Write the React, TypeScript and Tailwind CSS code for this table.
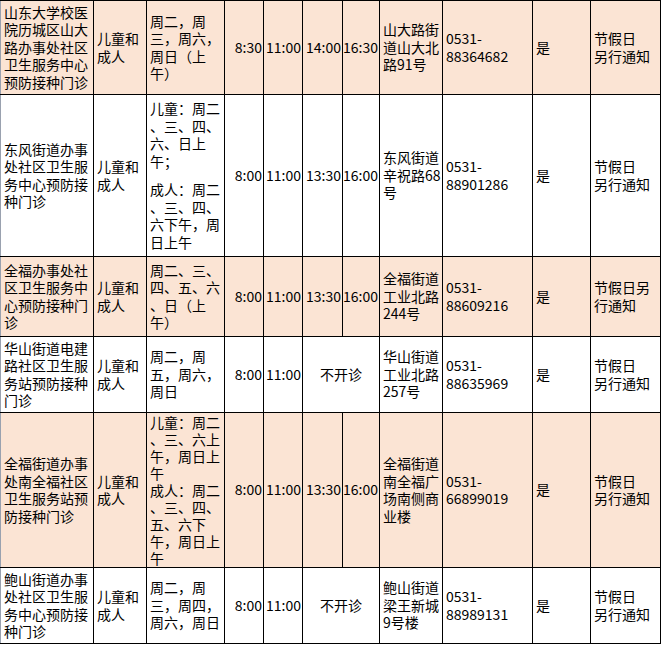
import React from "react";

type Row = {
  pink: boolean;
  h: string;
  name: string[];
  days: string[][];
  gap?: boolean;
  tight?: boolean;
  times: string[];
  addr: string[];
  phone: string[];
  note: string[];
};

const rows: Row[] = [
  {
    pink: true,
    h: "h-[94px]",
    name: ["山东大学校医", "院历城区山大", "路办事处社区", "卫生服务中心", "预防接种门诊"],
    days: [["周二，周", "三，周六，", "周日（上", "午）"]],
    times: ["8:30", "11:00", "14:00", "16:30"],
    addr: ["山大路街", "道山大北", "路91号"],
    phone: ["0531-", "88364682"],
    note: ["节假日", "另行通知"],
  },
  {
    pink: false,
    h: "h-[162px]",
    name: ["东风街道办事", "处社区卫生服", "务中心预防接", "种门诊"],
    days: [
      ["儿童：周二", "、三、四、", "六、日上", "午；"],
      ["成人：周二", "、三、四、", "六下午，周", "日上午"],
    ],
    gap: true,
    times: ["8:00", "11:00", "13:30", "16:00"],
    addr: ["东风街道", "辛祝路68", "号"],
    phone: ["0531-", "88901286"],
    note: ["节假日", "另行通知"],
  },
  {
    pink: true,
    h: "h-[80px]",
    name: ["全福办事处社", "区卫生服务中", "心预防接种门", "诊"],
    days: [["周二、三、", "四、五、六", "、日（上", "午）"]],
    times: ["8:00", "11:00", "13:30", "16:00"],
    addr: ["全福街道", "工业北路", "244号"],
    phone: ["0531-", "88609216"],
    note: ["节假日另", "行通知"],
  },
  {
    pink: false,
    h: "h-[76px]",
    name: ["华山街道电建", "路社区卫生服", "务站预防接种", "门诊"],
    days: [["周二，周", "五，周六，", "周日"]],
    times: ["8:00", "11:00"],
    addr: ["华山街道", "工业北路", "257号"],
    phone: ["0531-", "88635969"],
    note: ["节假日", "另行通知"],
  },
  {
    pink: true,
    h: "h-[155px]",
    name: ["全福街道办事", "处南全福社区", "卫生服务站预", "防接种门诊"],
    days: [
      ["儿童：周二", "、三、六上", "午，周日上", "午"],
      ["成人：周二", "、三、四、", "五、六下", "午，周日上", "午"],
    ],
    tight: true,
    times: ["8:00", "11:00", "13:30", "16:00"],
    addr: ["全福街道", "南全福广", "场南侧商", "业楼"],
    phone: ["0531-", "66899019"],
    note: ["节假日", "另行通知"],
  },
  {
    pink: false,
    h: "h-[76px]",
    name: ["鲍山街道办事", "处社区卫生服", "务中心预防接", "种门诊"],
    days: [["周二，周", "三，周四，", "周六，周日"]],
    times: ["8:00", "11:00"],
    addr: ["鲍山街道", "梁王新城", "9号楼"],
    phone: ["0531-", "88989131"],
    note: ["节假日", "另行通知"],
  },
];

const Lines = ({ lines }: { lines: string[] }) => (
  <div>
    {lines.map((l, i) => (
      <div key={i} className="whitespace-nowrap">
        {l}
      </div>
    ))}
  </div>
);

const td = "border border-black align-middle p-0 pl-[3px] overflow-hidden";
const tdTime = "border border-black align-middle p-0 pr-[1px] text-right whitespace-nowrap";

export default function App() {
  return (
    <div
      className="w-[663px] h-[645px] bg-white overflow-hidden text-black text-[14px] leading-[17.5px]"
      style={{ fontFamily: '"Noto Sans CJK SC", "Noto Sans", sans-serif' }}
    >
      <table className="table-fixed border-collapse w-[660px]">
        <colgroup>
          <col className="w-[93px]" />
          <col className="w-[53px]" />
          <col className="w-[78px]" />
          <col className="w-[39px]" />
          <col className="w-[39px]" />
          <col className="w-[40px]" />
          <col className="w-[37px]" />
          <col className="w-[63px]" />
          <col className="w-[90px]" />
          <col className="w-[58px]" />
          <col className="w-[70px]" />
        </colgroup>
        <tbody>
          {rows.map((r, i) => (
            <tr key={i} className={`${r.h} ${r.pink ? "bg-[#fbe4d4]" : "bg-white"}`}>
              <td className={`${td} border-l-gray-400`}>
                <Lines lines={r.name} />
              </td>
              <td className={td}>
                <Lines lines={["儿童和", "成人"]} />
              </td>
              <td className={td}>
                <div
                  className={`flex flex-col ${r.gap ? "gap-[11px]" : ""} ${
                    r.tight ? "leading-[17px]" : ""
                  }`}
                >
                  {r.days.map((d, j) => (
                    <Lines key={j} lines={d} />
                  ))}
                </div>
              </td>
              <td className={tdTime}>{r.times[0]}</td>
              <td className={tdTime}>{r.times[1]}</td>
              {r.times.length > 2 ? (
                <>
                  <td className={tdTime}>{r.times[2]}</td>
                  <td className={tdTime}>{r.times[3]}</td>
                </>
              ) : (
                <td
                  colSpan={2}
                  className="border border-black align-middle p-0 text-center whitespace-nowrap"
                >
                  不开诊
                </td>
              )}
              <td className={td}>
                <Lines lines={r.addr} />
              </td>
              <td className={td}>
                <Lines lines={r.phone} />
              </td>
              <td className={td}>是</td>
              <td className={td}>
                <Lines lines={r.note} />
              </td>
            </tr>
          ))}
        </tbody>
      </table>
    </div>
  );
}
